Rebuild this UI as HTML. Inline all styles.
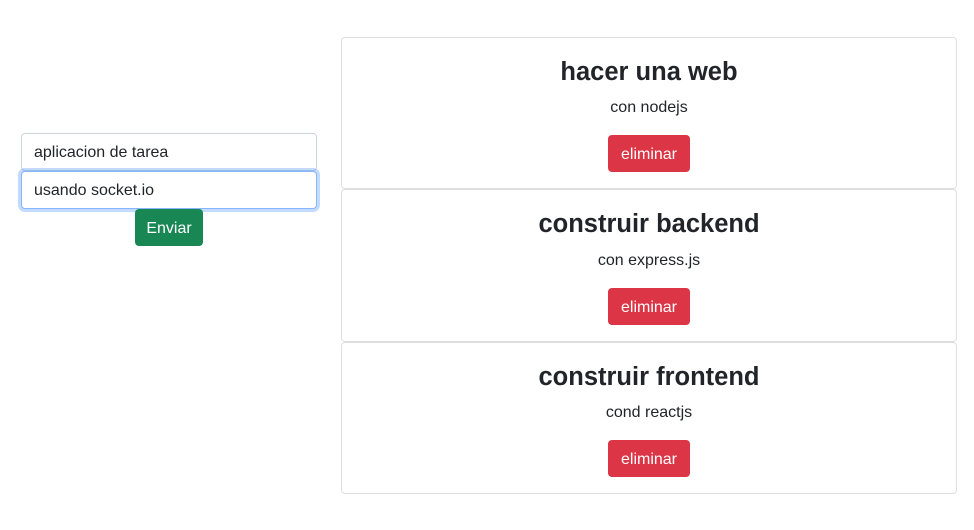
<!DOCTYPE html>
<html><head><meta charset="utf-8"><style>
body{margin:0;width:974px;height:530px;background:#fff;font-family:"Liberation Sans",sans-serif;color:#212529;position:relative;overflow:hidden}
.inp{position:absolute;left:21px;width:296px;height:38px;box-sizing:border-box;border:1px solid #ced4da;border-radius:4px;background:#fff;font-size:16px;padding:0 12px;line-height:38px}
.foc{border-color:#86b7fe;box-shadow:0 0 0 3px rgba(13,110,253,.25)}
.btn{position:absolute;color:#fff;font-size:16px;border-radius:4px;text-align:center;line-height:39px;height:37px}
.card{position:absolute;left:341px;width:616px;box-sizing:border-box;border:1px solid #dfdfdf;border-radius:4px;text-align:center}
.card h2{position:absolute;left:0;right:0;margin:0;font-size:25.5px;font-weight:bold}
.card p{position:absolute;left:0;right:0;margin:0;font-size:16px}
.card .btn{left:266px;width:82px;background:#dc3545}
</style></head><body>
<div class="inp" style="top:133px">aplicacion de tarea</div>
<div class="inp foc" style="top:171px">usando socket.io</div>
<div class="btn" style="left:135px;top:209px;width:68px;background:#198754">Enviar</div>

<div class="card" style="top:37px;height:152px"><h2 style="top:20px">hacer una web</h2><p style="top:61px">con nodejs</p><div class="btn" style="top:97px">eliminar</div></div>
<div class="card" style="top:189px;height:153px"><h2 style="top:20px">construir backend</h2><p style="top:62px">con express.js</p><div class="btn" style="top:98px">eliminar</div></div>
<div class="card" style="top:342px;height:152px"><h2 style="top:20px">construir frontend</h2><p style="top:61px">cond reactjs</p><div class="btn" style="top:97px">eliminar</div></div>
</body></html>
